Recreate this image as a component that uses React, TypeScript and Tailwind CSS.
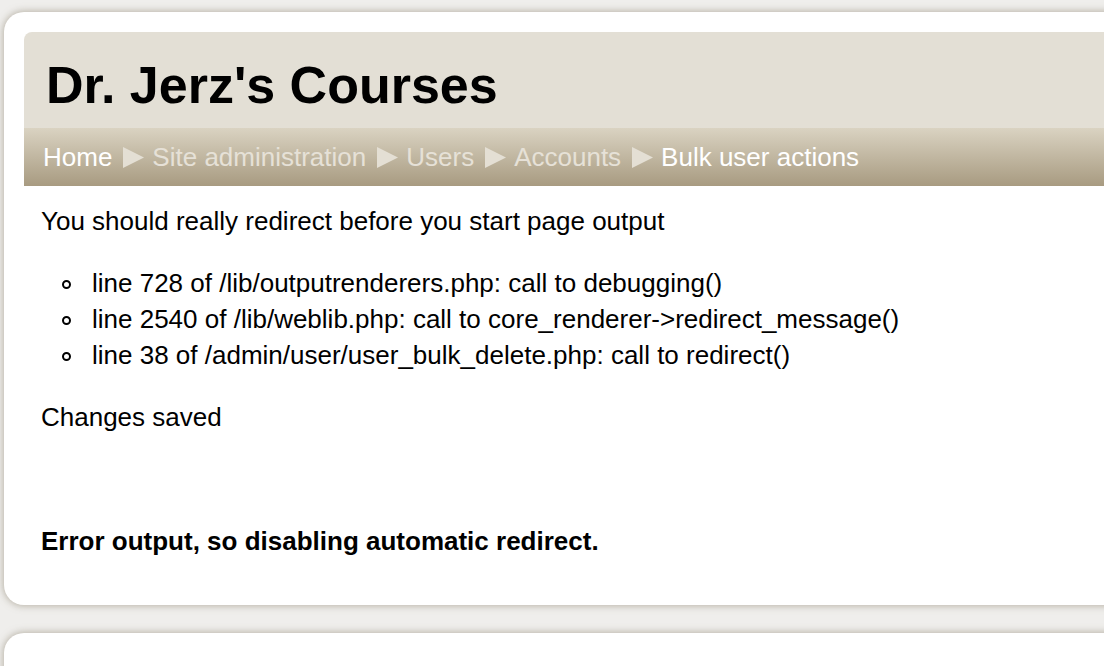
const crumbs = [
  { label: "Home", current: true },
  { label: "Site administration", current: false },
  { label: "Users", current: false },
  { label: "Accounts", current: false },
  { label: "Bulk user actions", current: true },
];

const trace = [
  "line 728 of /lib/outputrenderers.php: call to debugging()",
  "line 2540 of /lib/weblib.php: call to core_renderer->redirect_message()",
  "line 38 of /admin/user/user_bulk_delete.php: call to redirect()",
];

function Arrow() {
  return (
    <svg width="21" height="21" viewBox="0 0 20 20" className="ml-[11px] mr-[8px] shrink-0" aria-hidden="true">
      <polygon points="0,0 20,10 0,20" fill="#e4dfd4" />
    </svg>
  );
}

export default function App() {
  return (
    <div className="min-h-screen overflow-hidden bg-[#efeeec] pt-[12px] pl-[4px] font-['Liberation_Sans',Arial,sans-serif] text-black">
      {/* Main page box */}
      <div className="w-[1140px] rounded-[20px] bg-white p-[20px] pb-[46px] shadow-[0_0_7px_1px_rgba(140,132,112,0.55)]">
        {/* Header */}
        <div className="rounded-tl-[8px] bg-[#e3dfd5] h-[96px] pl-[22px] pt-[27px]">
          <h1 className="text-[52px] font-bold leading-none">Dr. Jerz's Courses</h1>
        </div>

        {/* Breadcrumb */}
        <div className="flex h-[58px] items-center bg-gradient-to-b from-[#dad3c2] to-[#a89b81] pl-[19px] text-[26px] leading-none">
          {crumbs.map((c, i) => (
            <div key={c.label} className="flex items-center">
              {i > 0 && <Arrow />}
              <span className={c.current ? "text-white" : "text-[#e6e1d7]"}>{c.label}</span>
            </div>
          ))}
        </div>

        {/* Content */}
        <div className="px-[17px] text-[26px] leading-[36px]">
          <p className="mt-[17px]">You should really redirect before you start page output</p>
          <ul className="mt-[26px]">
            {trace.map((t) => (
              <li key={t} className="flex items-center">
                <span className="ml-[21px] mr-[21px] mt-[2px] h-[9px] w-[9px] shrink-0 rounded-full border-2 border-black" />
                <span>{t}</span>
              </li>
            ))}
          </ul>
          <p className="mt-[26px]">Changes saved</p>
          <p className="mt-[88px] font-bold">Error output, so disabling automatic redirect.</p>
        </div>
      </div>

      {/* Next box */}
      <div className="mt-[28px] h-[200px] w-[1140px] rounded-[20px] bg-white shadow-[0_0_7px_1px_rgba(140,132,112,0.55)]" />
    </div>
  );
}
